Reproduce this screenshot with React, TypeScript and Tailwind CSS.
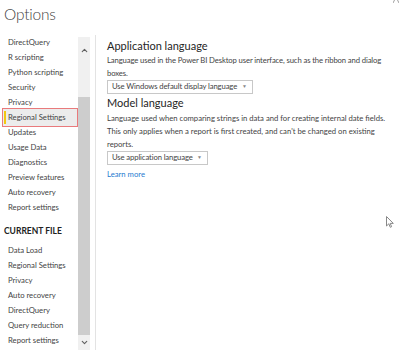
import { ChevronUp, ChevronDown } from 'lucide-react';

const globalItems = [
  'DirectQuery',
  'R scripting',
  'Python scripting',
  'Security',
  'Privacy',
  'Regional Settings',
  'Updates',
  'Usage Data',
  'Diagnostics',
  'Preview features',
  'Auto recovery',
  'Report settings',
];

const fileItems = [
  'Data Load',
  'Regional Settings',
  'Privacy',
  'Auto recovery',
  'DirectQuery',
  'Query reduction',
  'Report settings',
];

const NavItem = ({ label, active }: { label: string; active?: boolean }) => {
  if (active) {
    return (
      <div className="relative -my-[2px] ml-[2px] flex h-[19px] items-center border border-[#e97a7c] bg-[#ececec] pl-[5px]">
        <div className="absolute left-[1px] top-[2px] h-[13px] w-[2px] bg-[#f2c811]" />
        <span>{label}</span>
      </div>
    );
  }
  return <div className="flex h-[15px] items-center whitespace-nowrap pl-[8px]">{label}</div>;
};

const Dropdown = ({ label, width }: { label: string; width: string }) => (
  <div className={`flex h-[14px] items-center justify-between whitespace-nowrap border border-[#c8c8c8] pl-[4px] pr-[5px] ${width}`}>
    <span className="tracking-[-0.12px]">{label}</span>
    <span className="text-[5px] text-[#888]">▼</span>
  </div>
);

export default function App() {
  return (
    <div
      className="relative h-[350px] w-[400px] overflow-hidden bg-white text-[#333]"
      style={{ fontFamily: 'Lato, "Open Sans", sans-serif' }}
    >
      <div className="h-[35px] pl-[4px] pt-[3px] text-[15.5px] font-light tracking-[-0.2px] text-[#444]">Options</div>

      <div className="flex h-[315px]">
        <div className="w-[78px] text-[7.7px] text-[#444]">
          {globalItems.map((item) => (
            <NavItem key={item} label={item} active={item === 'Regional Settings'} />
          ))}
          <div className="mt-[9px] flex h-[15px] items-center pl-[4px] text-[8.5px] font-bold text-[#222]">
            CURRENT FILE
          </div>
          <div className="mt-[4px]">
            {fileItems.map((item) => (
              <NavItem key={item + '-f'} label={item} />
            ))}
          </div>
        </div>

        <div className="mt-[2px] flex w-[12px] flex-col bg-[#f0f0f0]">
          <div className="flex h-[26px] items-center justify-center">
            <ChevronUp size={9} strokeWidth={3} className="text-[#606060]" />
          </div>
          <div className="mt-[34px] h-[238px] bg-[#cdcdcd]" />
          <div className="flex flex-1 items-center justify-center">
            <ChevronDown size={9} strokeWidth={3} className="text-[#606060]" />
          </div>
        </div>

        <div className="ml-[5px] w-px bg-[#e3e3e3]" />

        <div className="flex-1 pl-[11px] pr-[10px] pt-[2px] text-[7.7px] text-[#444]">
          <div className="text-[11px] leading-[17px] text-[#252525]">Application language</div>
          <div className="-mr-[8px] leading-[13px] tracking-[-0.12px]">
            Language used in the Power BI Desktop user interface, such as the ribbon and dialog boxes.
          </div>
          <div>
            <Dropdown label="Use Windows default display language" width="w-[146px]" />
          </div>
          <div className="text-[11px] leading-[17px] text-[#252525]">Model language</div>
          <div className="mt-[1px] leading-[13px]">
            Language used when comparing strings in data and for creating internal date fields. This only applies
            when a report is first created, and can't be changed on existing reports.
          </div>
          <div>
            <Dropdown label="Use application language" width="w-[101px]" />
          </div>
          <div className="mt-[4px] text-[#1f7bd0]">Learn more</div>
        </div>
      </div>

      <div className="absolute right-[1px] top-0 h-[3px] w-[6px]">
        <svg width="6" height="3" viewBox="0 0 6 3">
          <path d="M0 3 L1.5 0 M4.5 0 L6 3" stroke="#a0a0a0" strokeWidth="1" fill="none" />
        </svg>
      </div>

      <div className="absolute left-[386px] top-[216px]">
        <svg width="8" height="12" viewBox="0 0 8 12">
          <path d="M0.5 0.5 L0.5 10 L2.8 7.8 L4.3 11.3 L5.6 10.7 L4.2 7.4 L7.3 7.4 Z" fill="white" stroke="#888" strokeWidth="1" />
        </svg>
      </div>
    </div>
  );
}
